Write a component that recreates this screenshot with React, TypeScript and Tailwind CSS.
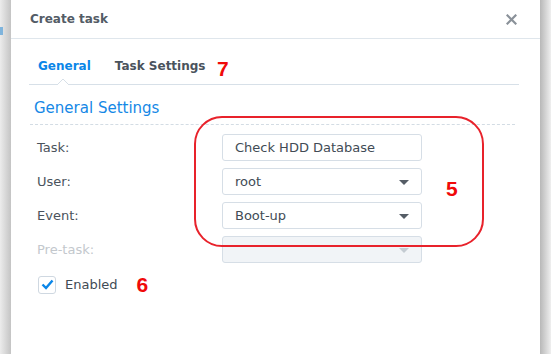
import React from "react";

const font = { fontFamily: '"DejaVu Sans", Verdana, sans-serif' };

function Caret({ disabled }: { disabled?: boolean }) {
  return (
    <svg width="10" height="6" viewBox="0 0 10 6" className="absolute right-[12px] top-[11px]">
      <path d="M0 0 L10 0 L5 5 Z" fill={disabled ? "#c4cbd2" : "#555d66"} />
    </svg>
  );
}

function Row({ label, value, select, disabled }: { label: string; value: string; select?: boolean; disabled?: boolean }) {
  return (
    <div className="flex items-center h-[27px]">
      <div className={`w-[211px] pl-[26px] text-[13px] ${disabled ? "text-[#c3c8cd]" : "text-[#4a535c]"}`}>{label}</div>
      <div
        className={`relative w-[200px] h-[27px] rounded-[3px] border border-[#d6dee6] flex items-center pl-[12px] text-[13px] text-[#414b55] ${disabled ? "bg-[#f1f4f7]" : "bg-white"}`}
      >
        {value}
        {select && <Caret disabled={disabled} />}
      </div>
    </div>
  );
}

export default function App() {
  return (
    <div className="w-[551px] h-[354px] flex overflow-hidden bg-white" style={font}>
      <div className="relative w-[11px] h-full bg-gradient-to-r from-[#ececec] to-[#c4c4c4]">
        <div className="absolute left-0 top-[27px] w-[3px] h-[8px] bg-[#7fb4dc]" />
      </div>
      <div className="relative w-[529px] h-full bg-white flex flex-col">
        <div className="h-[39px] border-b border-[#dfe6ec] flex items-center justify-between pl-[19px] pr-[23px] shrink-0">
          <span className="text-[12px] font-bold text-[#535c66]">Create task</span>
          <svg width="11" height="11" viewBox="0 0 11 11">
            <path d="M1.5 1.5 L9.5 9.5 M9.5 1.5 L1.5 9.5" stroke="#8a9199" strokeWidth="2.2" strokeLinecap="square" />
          </svg>
        </div>
        <div className="relative ml-[18px] mr-[21px] h-[46px] border-b border-[#d7e0e8] flex items-end pb-[9px] pl-[9px] gap-[24px] shrink-0">
          <span className="text-[12px] font-bold text-[#0a86e8]">General</span>
          <span className="text-[12px] font-bold text-[#4a535c]">Task Settings</span>
          <svg width="12" height="7" viewBox="0 0 12 7" className="absolute left-[28px] bottom-[-1px]">
            <path d="M0 7 L6 1 L12 7" fill="white" stroke="#d7e0e8" strokeWidth="1" />
          </svg>
          <span
            className="absolute left-[188px] top-[14px] text-[21px] font-bold text-[#f00a0a]"
            style={{ fontFamily: '"Liberation Sans", Arial, sans-serif' }}
          >
            7
          </span>
        </div>
        <div className="ml-[19px] mr-[25px] mt-[12px] pl-[4px] h-[28px] border-b border-dashed border-[#d3dce4] text-[15px] text-[#1588e6] leading-[22px]">
          General Settings
        </div>
        <div className="flex flex-col gap-[7px] mt-[9px]">
          <Row label="Task:" value="Check HDD Database" />
          <Row label="User:" value="root" select />
          <Row label="Event:" value="Boot-up" select />
          <Row label="Pre-task:" value="" select disabled />
        </div>
        <div className="flex items-center mt-[11px] pl-[27px]">
          <div className="w-[18px] h-[18px] rounded-[3px] border border-[#cfd8e1] flex items-center justify-center">
            <svg width="13" height="11" viewBox="0 0 13 11">
              <path d="M1.5 5.5 L5 9 L11.5 1.5" fill="none" stroke="#0a86e8" strokeWidth="2.4" />
            </svg>
          </div>
          <span className="ml-[9px] text-[13px] text-[#414b55]">Enabled</span>
          <span
            className="ml-[19px] text-[21px] font-bold text-[#f00a0a] leading-none"
            style={{ fontFamily: '"Liberation Sans", Arial, sans-serif' }}
          >
            6
          </span>
        </div>
        <div className="absolute left-[183px] top-[116px] w-[290px] h-[131px] rounded-[28px] border-2 border-[#e8222b]" />
        <span
          className="absolute left-[435px] top-[173px] text-[21px] font-bold text-[#f00a0a]"
          style={{ fontFamily: '"Liberation Sans", Arial, sans-serif' }}
        >
          5
        </span>
      </div>
      <div className="w-[11px] h-full bg-gradient-to-r from-[#b8b8b8] to-[#efefef]" />
    </div>
  );
}
